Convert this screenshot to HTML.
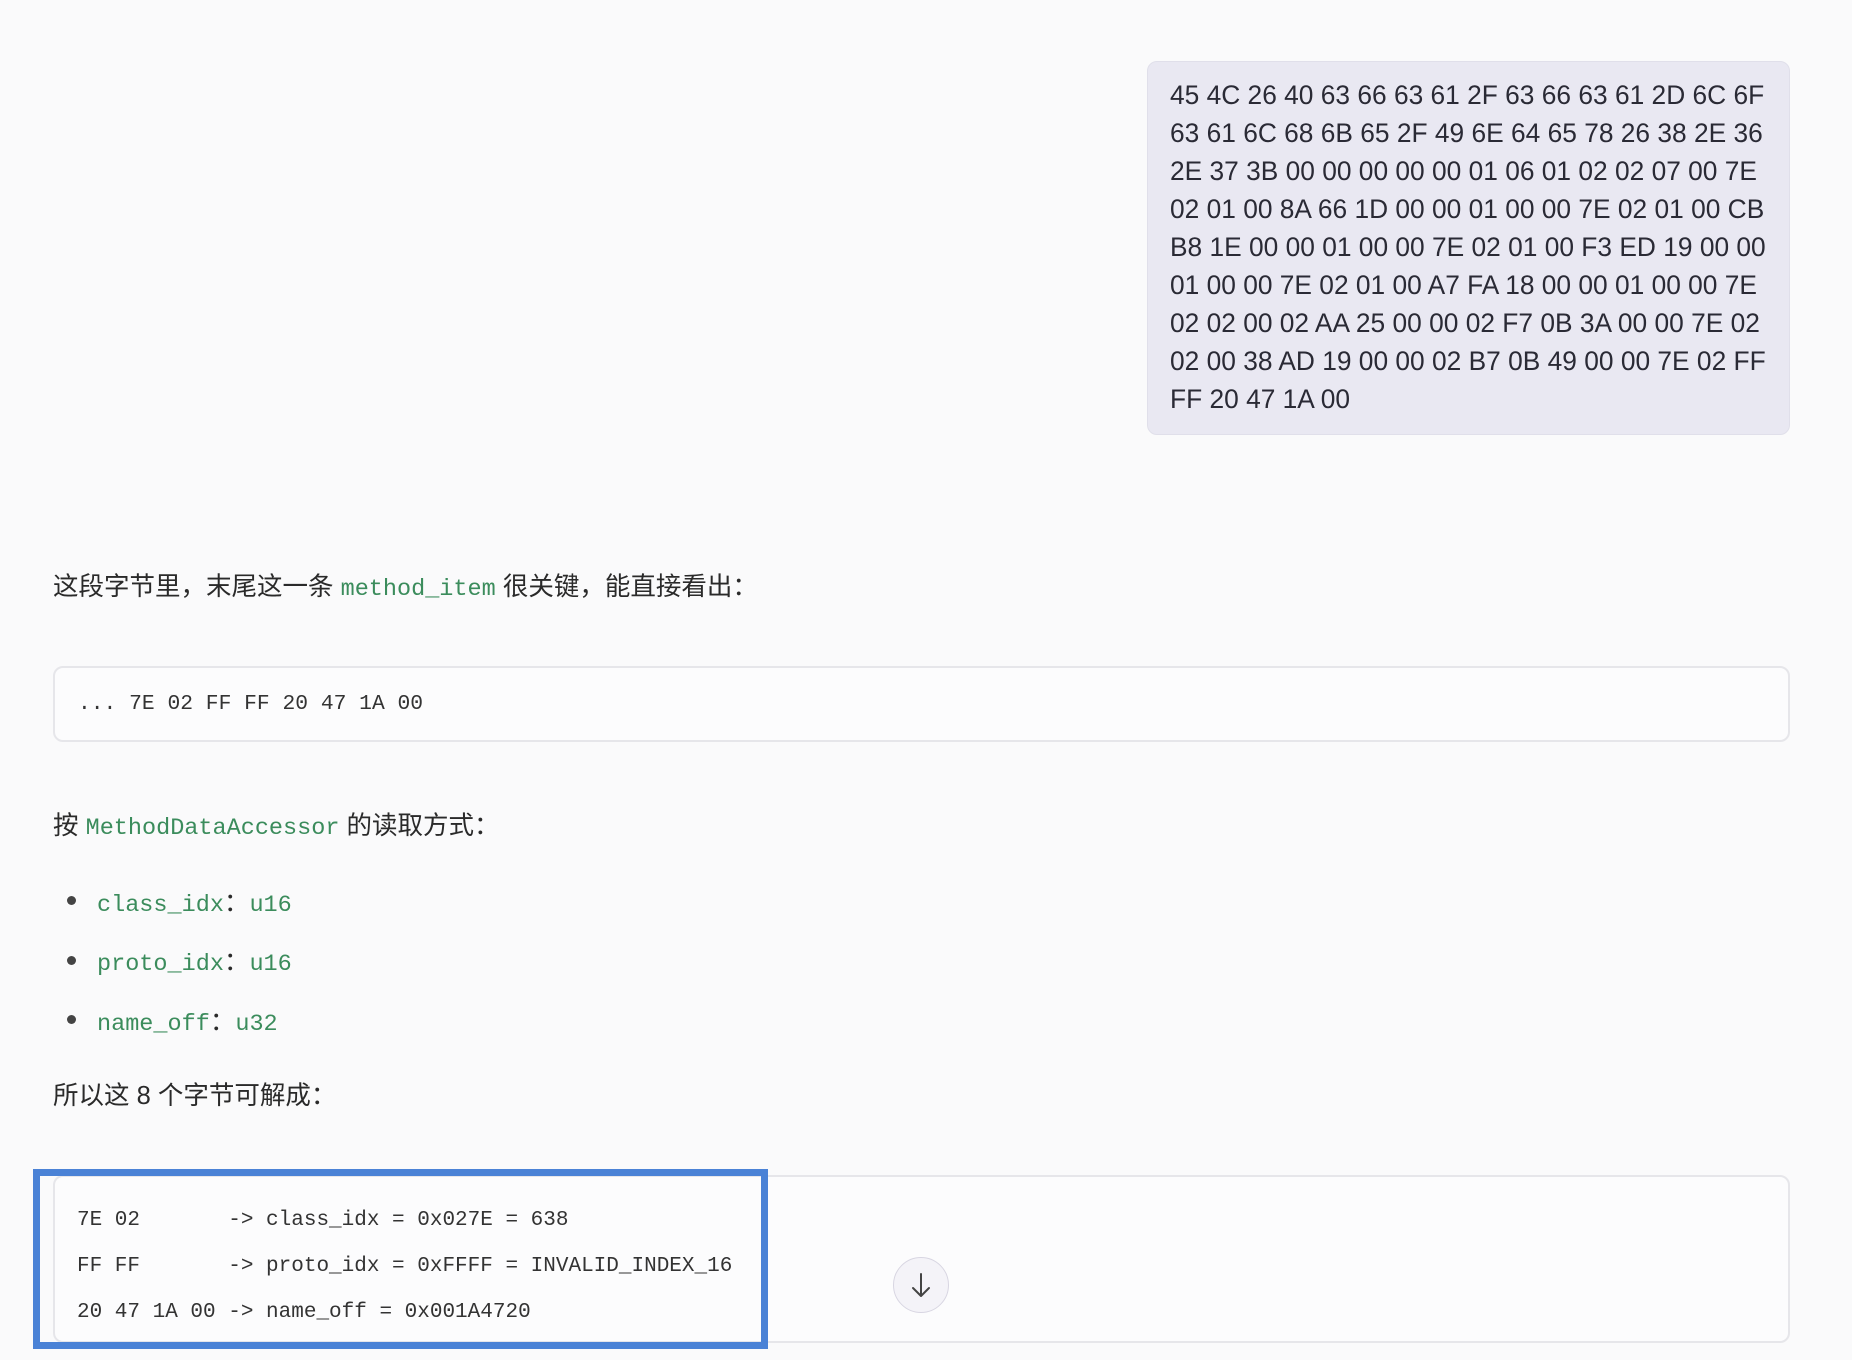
<!DOCTYPE html>
<html><head><meta charset="utf-8"><style>
body{margin:0;width:1852px;height:1360px;background:#fafafb;position:relative;overflow:hidden;font-family:"Liberation Sans","Noto Sans CJK SC",sans-serif;color:#222;}
.bubble{position:absolute;left:1147px;top:61px;width:643px;height:374px;background:#e9e8f2;border-radius:10px;border:1px solid #e0dfea;box-sizing:border-box;}
.hex{position:absolute;left:1170px;top:76px;font-size:27px;line-height:38px;white-space:pre;color:#2a2a35;transform:scaleX(0.975);transform-origin:left top;letter-spacing:0px}
.p{position:absolute;left:53px;font-size:25.5px;color:#2a2a2a;white-space:nowrap}
.g{font-family:"Liberation Mono",monospace;color:#3b8c5c;font-size:23.5px}
.code{position:absolute;left:53px;width:1737px;background:#fcfcfd;border:2px solid #e6e6ea;border-radius:10px;box-sizing:border-box}
.mono{position:absolute;font-family:"Liberation Mono",monospace;font-size:21.3px;color:#333;white-space:pre}
.dot{position:absolute;left:67px;width:9px;height:9px;border-radius:50%;background:#444}
</style></head><body>
<div class="bubble"></div>
<div class="hex">45 4C 26 40 63 66 63 61 2F 63 66 63 61 2D 6C 6F
63 61 6C 68 6B 65 2F 49 6E 64 65 78 26 38 2E 36
2E 37 3B 00 00 00 00 00 01 06 01 02 02 07 00 7E
02 01 00 8A 66 1D 00 00 01 00 00 7E 02 01 00 CB
B8 1E 00 00 01 00 00 7E 02 01 00 F3 ED 19 00 00
01 00 00 7E 02 01 00 A7 FA 18 00 00 01 00 00 7E
02 02 00 02 AA 25 00 00 02 F7 0B 3A 00 00 7E 02
02 00 38 AD 19 00 00 02 B7 0B 49 00 00 7E 02 FF
FF 20 47 1A 00</div>

<div class="p" style="top:566px">这段字节里，末尾这一条 <span class="g">method_item</span> 很关键，能直接看出：</div>
<div class="code" style="top:666px;height:76px"></div>
<div class="mono" style="left:78px;top:692px">... 7E 02 FF FF 20 47 1A 00</div>

<div class="p" style="top:805px">按 <span class="g">MethodDataAccessor</span> 的读取方式：</div>
<div class="dot" style="top:896px"></div><div class="p" style="left:97px;top:882px"><span class="g">class_idx</span>：<span class="g">u16</span></div>
<div class="dot" style="top:956px"></div><div class="p" style="left:97px;top:941px"><span class="g">proto_idx</span>：<span class="g">u16</span></div>
<div class="dot" style="top:1015px"></div><div class="p" style="left:97px;top:1001px"><span class="g">name_off</span>：<span class="g">u32</span></div>
<div class="p" style="top:1075px">所以这 8 个字节可解成：</div>

<div class="code" style="top:1175px;height:168px"></div>
<div class="mono" style="left:77px;top:1198px;line-height:46px;font-size:21px">7E 02       -&gt; class_idx = 0x027E = 638
FF FF       -&gt; proto_idx = 0xFFFF = INVALID_INDEX_16
20 47 1A 00 -&gt; name_off = 0x001A4720</div>
<div style="position:absolute;left:33px;top:1169px;width:735px;height:180px;border:7px solid #4a82d6;box-sizing:border-box"></div>
<div style="position:absolute;left:893px;top:1257px;width:56px;height:56px;border-radius:50%;background:#f4f3f8;border:1.5px solid #d8d6e2;box-sizing:border-box">
<svg width="56" height="56" viewBox="0 0 56 56" style="position:absolute;left:-1.5px;top:-1.5px"><path d="M28 17v22M20 31l8 8 8-8" fill="none" stroke="#444" stroke-width="2" stroke-linecap="round" stroke-linejoin="round"/></svg></div>
</body></html>
